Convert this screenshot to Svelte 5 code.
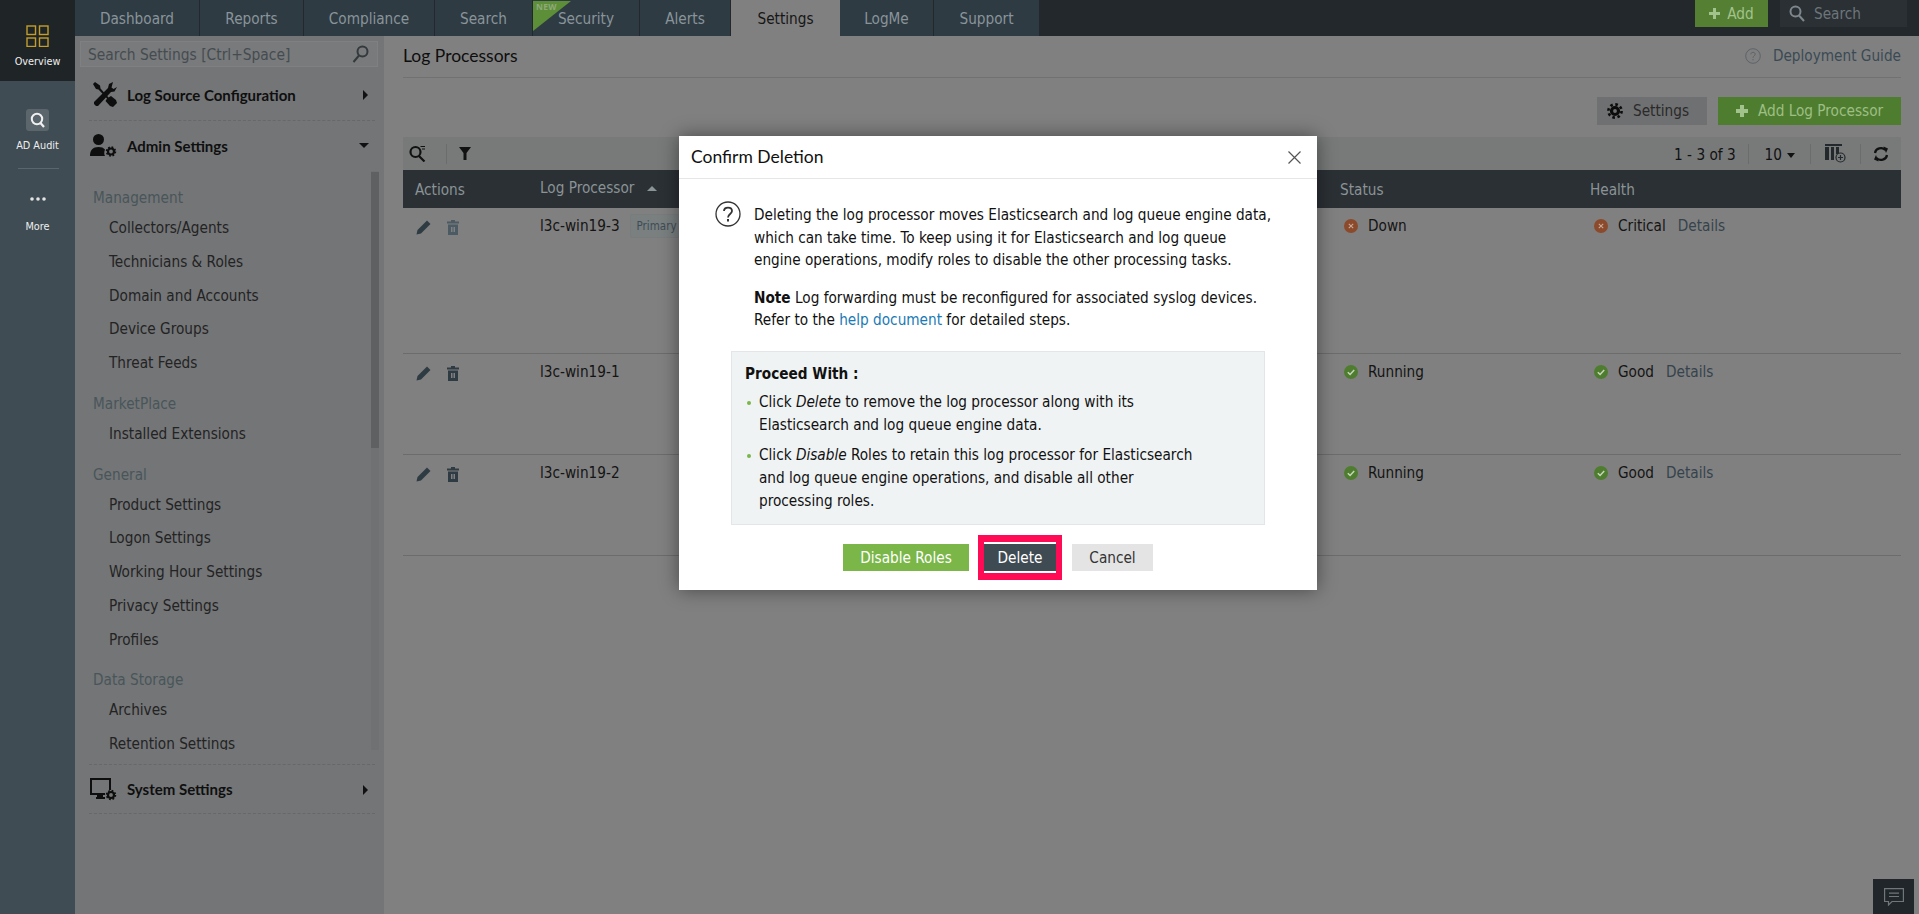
<script>
  const tabs = [
    { label: 'Dashboard', w: 125 },
    { label: 'Reports', w: 104 },
    { label: 'Compliance', w: 131 },
    { label: 'Search', w: 98 },
    { label: 'Security', w: 107, isNew: true },
    { label: 'Alerts', w: 91 },
    { label: 'Settings', w: 109, active: true },
    { label: 'LogMe', w: 94 },
    { label: 'Support', w: 106 }
  ];
  const sections = [
    { title: 'Management', items: ['Collectors/Agents', 'Technicians & Roles', 'Domain and Accounts', 'Device Groups', 'Threat Feeds'] },
    { title: 'MarketPlace', items: ['Installed Extensions'] },
    { title: 'General', items: ['Product Settings', 'Logon Settings', 'Working Hour Settings', 'Privacy Settings', 'Profiles'] },
    { title: 'Data Storage', items: ['Archives', 'Retention Settings'] }
  ];
  const rows = [
    { name: 'l3c-win19-3', primary: true, status: 'Down', health: 'Critical', ok: false, h: 146, faded: true },
    { name: 'l3c-win19-1', status: 'Running', health: 'Good', ok: true, h: 101 },
    { name: 'l3c-win19-2', status: 'Running', health: 'Good', ok: true, h: 101 }
  ];
</script>

{#snippet statusIcon(ok)}
  <svg class="st" viewBox="0 0 14 14" width="14" height="14">
    <circle cx="7" cy="7" r="7" fill={ok ? '#4f7d2f' : '#8a4a2b'} />
    {#if ok}
      <path d="M3.8 7.2 6.1 9.5 10.2 4.9" fill="none" stroke="#c5d6b8" stroke-width="1.5" />
    {:else}
      <path d="M4.8 4.8 9.2 9.2M9.2 4.8 4.8 9.2" fill="none" stroke="#c9aa9a" stroke-width="1.1" />
    {/if}
  </svg>
{/snippet}

{#snippet gear(cx, cy)}
  <g fill="none" stroke="#0e0e0e">
    <circle cx={cx} cy={cy} r="3" stroke-width="2.200" />
    <circle cx={cx} cy={cy} r="4.400" stroke-width="1.700" stroke-dasharray="1.730" />
  </g>
{/snippet}

<div class="page">
  <aside class="rail">
    <div class="rail-item active">
      <svg viewBox="0 0 23 22" width="23" height="22" fill="none" stroke="#c39e2c" stroke-width="1.4">
        <rect x="1" y="1" width="8.5" height="8.5" /><rect x="13.5" y="1" width="8.5" height="8.5" />
        <rect x="1" y="13" width="8.5" height="8.5" /><rect x="13.5" y="13" width="8.5" height="8.5" />
      </svg>
      <span>Overview</span>
    </div>
    <div class="rail-item audit">
      <svg viewBox="0 0 23 22" width="23" height="22">
        <rect width="23" height="22" rx="3" fill="#5a666c" />
        <circle cx="11" cy="10" r="5.2" fill="none" stroke="#f0f0f0" stroke-width="2" />
        <path d="M14.5 14 18 18" stroke="#f0f0f0" stroke-width="2.2" />
      </svg>
      <span>AD Audit</span>
    </div>
    <div class="rail-sep"></div>
    <div class="rail-item more">
      <svg viewBox="0 0 18 4" width="18" height="4" fill="#e4e4e4">
        <circle cx="3" cy="2" r="1.8" /><circle cx="9" cy="2" r="1.8" /><circle cx="15" cy="2" r="1.8" />
      </svg>
      <span>More</span>
    </div>
  </aside>

  <div class="column">
    <header class="topbar">
      <nav class="tabs">
        {#each tabs as t}
          <div class="tab" class:active={t.active} style:width="{t.w}px">
            {#if t.isNew}
              <svg class="ribbon" viewBox="0 0 38 30" width="38" height="30"><path d="M0 0H38L0 30Z" fill="#5d8f38" /></svg>
              <span class="new">NEW</span>
            {/if}
            {t.label}
          </div>
        {/each}
      </nav>
      <div class="top-right">
        <div class="top-add">
          <svg viewBox="0 0 11 11" width="11" height="11"><path d="M4 0h3v4h4v3H7v4H4V7H0V4h4Z" fill="#a3c38c" /></svg>
          Add
        </div>
        <div class="top-search">
          <svg viewBox="0 0 16 17" width="16" height="17" fill="none" stroke="#7d878c" stroke-width="2">
            <circle cx="6.5" cy="6.5" r="5" /><path d="M10 10.5 15 16" />
          </svg>
          Search
        </div>
      </div>
    </header>

    <div class="body">
      <aside class="sidebar">
        <div class="side-search">
          <span>Search Settings [Ctrl+Space]</span>
          <svg viewBox="0 0 17 19" width="17" height="19" fill="none" stroke="#33393c" stroke-width="2">
            <circle cx="10.5" cy="6.5" r="5" /><path d="M7 10.5 1.5 17" />
          </svg>
        </div>

        <div class="group first">
          <svg viewBox="0 0 24 25" width="24" height="25" fill="#0e0e0e">
            <path d="M2 0 0 2 3 7 5.500 7.500 14 16.500 12.500 19 17 24 20 25 24 21 23 18 18 14 15.500 15.500 7.500 6.500 7 3.500Z" />
            <path d="M20 0 16 2 15 6 1 20 1 22 3 24 5 24 18 10 21.500 9.500 24 5 20.500 7 18.500 5.500Z" />
          </svg>
          <span>Log Source Configuration</span>
          <i class="arrow right"></i>
        </div>

        <div class="group admin">
          <svg viewBox="0 0 27 26" width="27" height="26" fill="#0e0e0e">
            <circle cx="8.5" cy="6.5" r="5.5" />
            <path d="M0 23c0-6 3-9 8.500-9 3 0 5 .8 6.500 2.500-1 2-1 5 0 6.500Z" />
            {@render gear(21, 18.500)}
          </svg>
          <span>Admin Settings</span>
          <i class="arrow down"></i>
        </div>

        <div class="scroller">
          {#each sections as s}
            <div class="sec">{s.title}</div>
            {#each s.items as it}
              <div class="item">{it}</div>
            {/each}
          {/each}
          <div class="track"><div class="thumb"></div></div>
        </div>

        <div class="group system">
          <svg viewBox="0 0 27 23" width="27" height="23" fill="#0e0e0e">
            <path d="M0 0H21V12H19V2H2V15H15V17H0Z" />
            <path d="M7 17h6v2h2v2H6v-2h1Z" />
            {@render gear(21, 17)}
          </svg>
          <span>System Settings</span>
          <i class="arrow right"></i>
        </div>
      </aside>

      <main class="main">
        <div class="title-row">
          <h1>Log Processors</h1>
          <div class="guide">
            <svg viewBox="0 0 16 16" width="16" height="16" fill="none" stroke="#5c6468" stroke-width="1">
              <circle cx="8" cy="8" r="7.300" />
              <path d="M5.800 6.300C5.800 3.700 10.200 3.700 10.200 6.200 10.200 7.800 8 7.800 8 9.800M8 11v1.400" />
            </svg>
            <span>Deployment Guide</span>
          </div>
        </div>

        <div class="actions">
          <button class="btn-settings">
            <svg viewBox="0 0 16 16" width="16" height="16" fill="#0c0c0c">
              <circle cx="8" cy="8" r="3.500" fill="none" stroke="#0c0c0c" stroke-width="3.200" />
              <circle cx="8" cy="8" r="6.600" fill="none" stroke="#0c0c0c" stroke-width="2.600" stroke-dasharray="2.600 2.600" />
            </svg>
            Settings
          </button>
          <button class="btn-add">
            <svg viewBox="0 0 12 12" width="12" height="12"><path d="M4 0h4v4h4v4H8v4H4V8H0V4h4Z" fill="#a3c38c" /></svg>
            Add Log Processor
          </button>
        </div>

        <div class="toolbar">
          <div class="tool-left">
            <svg viewBox="0 0 17 17" width="17" height="17" fill="none" stroke="#111" stroke-width="2.200">
              <circle cx="6.500" cy="7" r="5" /><path d="M10 11 15.500 16.500" />
              <path d="M11.500 1.500H16M13 4H16" stroke-width="1" />
            </svg>
            <i class="vsep"></i>
            <svg viewBox="0 0 12 13" width="12" height="13" fill="#111"><path d="M0 0H12L7.500 6V13H4.500V6Z" /></svg>
          </div>
          <div class="tool-right">
            <span class="count">1 - 3 of 3</span>
            <i class="vsep"></i>
            <span class="size">10 <i class="caret"></i></span>
            <i class="vsep"></i>
            <svg class="cols" viewBox="0 0 21 19" width="21" height="19">
              <path d="M0 0H17V2H0ZM0 3H4V16H0ZM6 3H9V16H6ZM11 3H14V10H11Z" fill="#22282c" />
              <circle cx="15.500" cy="13.500" r="4.500" fill="#787a7a" stroke="#22282c" stroke-width="1.200" />
              <path d="M15.500 11v5M13 13.500h5" stroke="#22282c" stroke-width="1.200" />
            </svg>
            <i class="vsep"></i>
            <svg viewBox="0 0 16 16" width="16" height="16" fill="none" stroke="#111" stroke-width="2.200">
              <path d="M2 7A6 5.500 0 0 1 12.500 4M14 9A6 5.500 0 0 1 3.500 12" />
              <path d="M10.500 0.500 15 2.500 13 7ZM5.500 15.500 1 13.500 3 9Z" fill="#111" stroke="none" />
            </svg>
          </div>
        </div>

        <div class="thead grid">
          <span class="th-a">Actions</span>
          <span class="th-lp">Log Processor <i class="up"></i></span>
          <span class="th-s">Status</span>
          <span class="th-h">Health</span>
        </div>

        {#each rows as r}
          <div class="row grid" style:height="{r.h}px">
            <div class="acts">
              <svg viewBox="0 0 15 15" width="15" height="15" fill="#2f3b43">
                <path d="M11 0.500 14.500 4 5 13.500 0.500 14.500 1.500 10Z" />
              </svg>
              <svg viewBox="0 0 12 15" width="12" height="15" fill={r.faded ? '#4c5a63' : '#2f3b43'}>
                <path d="M4 0H8V1.500H12V3.500H0V1.500H4ZM1 4.500H11V15H1Z" />
                <path d="M4 7H5.500V12H4ZM6.500 7H8V12H6.500Z" fill="#808080" />
              </svg>
            </div>
            <div class="name">
              {r.name}
              {#if r.primary}<span class="badge">Primary</span>{/if}
            </div>
            <div class="stat">{@render statusIcon(r.ok)}{r.status}</div>
            <div class="stat">{@render statusIcon(r.ok)}{r.health}<span class="details">Details</span></div>
          </div>
        {/each}
      </main>
    </div>
  </div>

  <div class="modal">
    <div class="m-head">
      <h2>Confirm Deletion</h2>
      <svg viewBox="0 0 13 13" width="13" height="13" stroke="#555" stroke-width="1.200"><path d="M0.500 0.500 12.500 12.500M12.500 0.500 0.500 12.500" /></svg>
    </div>
    <div class="m-body">
      <div class="lead">
        <svg viewBox="0 0 26 26" width="26" height="26" fill="none" stroke="#333" stroke-width="1.300">
          <circle cx="13" cy="13" r="12" />
          <path d="M9 10C9 5.500 17 5.500 17 10 17 13 13 13 13 16.500" stroke-width="1.800" />
          <path d="M13 18v2.500" stroke-width="2" />
        </svg>
        <div class="copy">
          <p>Deleting the log processor moves Elasticsearch and log queue engine data, which can take time. To keep using it for Elasticsearch and log queue engine operations, modify roles to disable the other processing tasks.</p>
          <p class="note"><b>Note</b> Log forwarding must be reconfigured for associated syslog devices. Refer to the <span class="link">help document</span> for detailed steps.</p>
        </div>
      </div>
      <div class="box">
        <div class="box-title">Proceed With :</div>
        <ul>
          <li>Click <em>Delete</em> to remove the log processor along with its<br />Elasticsearch and log queue engine data.</li>
          <li>Click <em>Disable</em> Roles to retain this log processor for Elasticsearch<br />and log queue engine operations, and disable all other<br />processing roles.</li>
        </ul>
      </div>
      <div class="m-btns">
        <button class="b-disable">Disable Roles</button>
        <span class="frame"><button class="b-delete">Delete</button></span>
        <button class="b-cancel">Cancel</button>
      </div>
    </div>
  </div>

  <div class="chat">
    <svg viewBox="0 0 20 18" width="20" height="18" fill="none" stroke="#6f777b" stroke-width="1.200">
      <path d="M0.600 0.600H19.400V13.500H8L4.500 17V13.500H0.600Z" />
      <path d="M5 5.200H15M5 8.500H15" />
    </svg>
  </div>
</div>

<style>
  :global(body) { margin: 0; background: #808080; }
  .page {
    position: relative;
    display: flex;
    width: 1919px;
    height: 914px;
    overflow: hidden;
    font: 15.200px "DejaVu Sans Condensed", "DejaVu Sans", sans-serif;
    color: #141414;
    background: #808080;
  }
  i { display: inline-block; font-style: normal; }
  button { font: inherit; border: 0; padding: 0; }

  .rail { width: 75px; flex: none; background: #3f4c53; color: #eee; font-size: 10.800px; }
  .rail-item { display: flex; flex-direction: column; align-items: center; }
  .rail-item.active { height: 81px; background: #1f2427; padding-top: 25px; box-sizing: border-box; gap: 8px; }
  .rail-item.audit { padding-top: 28px; gap: 8px; }
  .rail-sep { height: 1px; width: 41px; background: #5b666c; margin: 16px 0 0 18px; }
  .rail-item.more { padding-top: 28px; gap: 19px; }

  .column { flex: 1; min-width: 0; display: flex; flex-direction: column; }
  .topbar { height: 36px; flex: none; background: #23282c; display: flex; justify-content: space-between; }
  .tabs { display: flex; }
  .tab {
    position: relative;
    box-sizing: border-box;
    height: 36px;
    line-height: 39px;
    text-align: center;
    background: #2f3b43;
    color: #89949a;
    border-right: 1px solid #23282c;
  }
  .tab.active { background: #808080; color: #161616; border-right: 0; }
  .ribbon { position: absolute; left: 0; top: 1px; }
  .new { position: absolute; left: 3px; top: 1px; font: 700 8.500px/11px "Noto Sans", sans-serif; color: #8ea87b; letter-spacing: .3px; }

  .top-right { display: flex; gap: 12px; margin-right: 12px; }
  .top-add {
    width: 73px; height: 27px; box-sizing: border-box;
    background: #557f33; color: #a3c38c;
    display: flex; align-items: center; justify-content: center; gap: 7px;
  }
  .top-search {
    width: 127px; height: 27px; box-sizing: border-box; padding-left: 9px;
    background: #2b3035; color: #6c767a;
    display: flex; align-items: center; gap: 9px;
  }

  .body { flex: 1; display: flex; min-height: 0; }
  .sidebar { width: 309px; flex: none; background: #737577; }
  .side-search {
    height: 26px; margin: 5px 6px 0 5px; box-sizing: border-box;
    background: #787a7c; border: 1px solid #7e8082;
    padding: 0 8px 0 7px; display: flex; align-items: center; justify-content: space-between;
    color: #454c50;
  }
  .side-search span { margin-top: 2px; font-size: 15.400px; }
  .group {
    position: relative; display: flex; align-items: center; gap: 10px;
    font: 700 15px "Lato", sans-serif; color: #0f0f0f; padding-left: 18px;
  }
  .group svg { flex: none; }
  .group.first { height: 54px; }
  .group.first span { margin-top: 2px; }
  .group.first::after, .group.system::before, .group.system::after {
    content: ""; position: absolute; left: 14px; right: 9px; border-top: 1px dashed #66686a;
  }
  .group.first::after { bottom: 0; }
  .group.system { height: 50px; margin-top: 14px; padding-left: 15px; gap: 10px; }
  .group.system::before { top: 0; }
  .group.system::after { bottom: 0; }
  .group.admin { height: 50px; padding-left: 15px; gap: 10px; }
  .arrow { position: absolute; right: 16px; top: 50%; width: 0; height: 0; }
  .arrow.right { border-left: 5px solid #111; border-top: 5px solid transparent; border-bottom: 5px solid transparent; margin-top: -4px; }
  .arrow.down { right: 15px; border-top: 5px solid #111; border-left: 5px solid transparent; border-right: 5px solid transparent; margin-top: -3px; }

  .scroller { position: relative; height: 579px; padding-top: 13px; box-sizing: border-box; overflow: hidden; }
  .sec { height: 28px; line-height: 28px; margin-top: 9px; padding-left: 18px; color: #495559; }
  .sec:first-child { margin-top: 0; }
  .item { height: 33.750px; line-height: 33.750px; padding-left: 34px; color: #232323; }
  .track { position: absolute; left: 296px; top: 0; bottom: 0; width: 8px; background: #6f7173; }
  .thumb { height: 276px; margin-top: 1px; background: #5e6062; }

  .main { flex: 1; min-width: 0; padding: 0 18px 0 19px; }
  .title-row {
    height: 41px; border-bottom: 1px solid #707272; display: flex; justify-content: space-between; align-items: center;
  }
  h1 { margin: -3px 0 0; font: 400 17.500px "Lato", sans-serif; color: #0e0e0e; }
  .guide { display: flex; align-items: center; gap: 12px; color: #3a4a54; margin-top: -1px; }
  .actions { display: flex; justify-content: flex-end; gap: 11px; margin-top: 19px; }
  .btn-settings {
    width: 110px; height: 28px; background: #6f7071; color: #2a2a2a;
    display: flex; align-items: center; padding: 0 0 0 10px; gap: 10px; box-sizing: border-box;
  }
  .btn-add {
    width: 183px; height: 28px; background: #4f7d2f; color: #9dbf85;
    display: flex; align-items: center; justify-content: center; gap: 10px;
  }
  .toolbar {
    height: 33px; margin-top: 12px; background: #787a7a; display: flex; justify-content: space-between; align-items: center;
  }
  .tool-left { display: flex; align-items: center; padding-left: 6px; gap: 12px; }
  .tool-left .vsep { margin-left: 8px; }
  .vsep { width: 1px; height: 20px; background: #6b6d6d; }
  .tool-right { display: flex; align-items: center; padding-right: 12px; color: #111; }
  .count { margin: 3px 12px 0 0; }
  .size { margin: 3px 15px 0 16px; display: inline-flex; align-items: center; gap: 5px; }
  .caret { width: 0; height: 0; border-top: 5px solid #111; border-left: 4.500px solid transparent; border-right: 4.500px solid transparent; }
  .cols { margin: 0 14px; }
  .tool-right > svg:last-child { margin-left: 12px; }

  .grid { display: grid; grid-template-columns: 137px 800px 250px 1fr; }
  .thead { height: 38px; background: #2b3035; color: #8a9396; align-items: center; }
  .thead span { margin-top: 2px; }
  .th-a { padding-left: 12px; }
  .thead .th-lp { margin-top: -2px; }
  .up { width: 0; height: 0; margin-left: 8px; vertical-align: 2px; border-bottom: 5px solid #8a9396; border-left: 5px solid transparent; border-right: 5px solid transparent; }
  .row { box-sizing: border-box; border-bottom: 1px solid #6b6d6d; padding-top: 8px; align-items: start; }
  .acts { display: flex; gap: 16px; padding: 4px 0 0 13px; }
  .name { display: flex; align-items: center; height: 20px; gap: 10px; }
  .badge { font-size: 11.500px; color: #3e4d55; background: #7a7f80; border: 1px solid #787c7d; border-radius: 2px; padding: 2px 6px; line-height: 18px; }
  .stat { display: flex; align-items: center; height: 20px; }
  .st { margin: 0 10px 0 4px; flex: none; }
  .details { color: #35434c; margin-left: 12px; }

  .modal {
    position: absolute; left: 679px; top: 136px; width: 638px; height: 454px;
    background: #fff; box-shadow: 0 0 18px rgba(0, 0, 0, .45);
    color: #111;
  }
  .m-head {
    height: 42px; border-bottom: 1px solid #e4e6e8; display: flex; align-items: center; justify-content: space-between;
    padding: 0 16px 0 12px;
  }
  h2 { margin: -2px 0 0; font: 400 17.500px "Lato", sans-serif; color: #111; }
  .m-body { padding: 22px 0 0 36px; }
  .lead { display: flex; gap: 13px; }
  .copy { width: 522px; line-height: 22.500px; margin-top: 3px; }
  p { margin: 0; }
  .note { margin-top: 15px; }
  .link { color: #1a7ab5; }
  .box {
    box-sizing: border-box; width: 534px; height: 174px; margin: 19px 0 0 16px;
    background: #f0f3f4; border: 1px solid #e3e6e8; padding: 11px 13px;
  }
  .box-title { font-weight: 700; line-height: 22px; }
  ul { list-style: none; margin: 6px 0 0; padding: 0 0 0 14px; line-height: 23px; }
  li { position: relative; margin-bottom: 7px; }
  li::before { content: ""; position: absolute; left: -12px; top: 10px; width: 4px; height: 4px; border-radius: 50%; background: #7ab648; }
  .m-btns { display: flex; align-items: center; margin: 10px 0 0 128px; }
  .m-btns button { height: 27px; padding-top: 2px; }
  .b-disable { width: 126px; background: #7ab648; color: #fff; }
  .frame { display: block; margin: 0 10px 0 9px; padding: 2px 0; border: solid #ff0a54; border-width: 7px 6px; background: #fff; }
  .b-delete { display: block; width: 72px; background: #3f4b52; color: #fff; }
  .b-cancel { width: 81px; background: #e4e4e4; color: #333; }

  .chat {
    position: absolute; right: 5px; bottom: 0; width: 41px; height: 35px; background: #20262a;
    display: flex; align-items: center; justify-content: center;
  }
</style>
